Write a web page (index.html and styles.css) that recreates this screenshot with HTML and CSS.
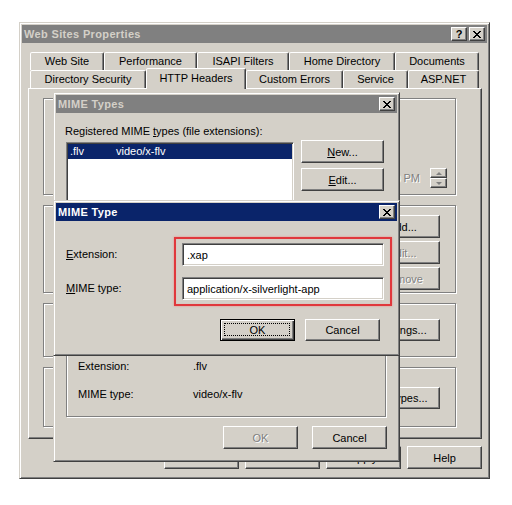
FILE: index.html
```html
<!DOCTYPE html>
<html>
<head>
<meta charset="utf-8">
<title>Web Sites Properties</title>
<link rel="stylesheet" href="styles.css">
</head>
<body>
<div class="desk">

  <div class="win w-props">
    <div class="titlebar inactive">
      <span class="title">Web Sites Properties</span>
      <span class="tbtns">
        <span class="tbtn qm">?</span>
        <span class="tbtn"><svg width="8" height="7" viewBox="0 0 8 7"><path d="M0 0h2v1H0zM6 0h2v1H6zM1 1h2v1H1zM5 1h2v1H5zM2 2h4v1H2zM3 3h2v1H3zM2 4h4v1H2zM1 5h2v1H1zM5 5h2v1H5zM0 6h2v1H0zM6 6h2v1H6z" fill="#000"/></svg></span>
      </span>
    </div>
    <div class="props-body">
      <div class="tabs">
        <div class="tabrow">
          <div class="tab t-web">Web Site</div>
          <div class="tab t-perf">Performance</div>
          <div class="tab t-isapi">ISAPI Filters</div>
          <div class="tab t-home">Home Directory</div>
          <div class="tab t-docs">Documents</div>
        </div>
        <div class="tabrow">
          <div class="tab t-dirsec">Directory Security</div>
          <div class="tab t-http selected">HTTP Headers</div>
          <div class="tab t-errors">Custom Errors</div>
          <div class="tab t-service">Service</div>
          <div class="tab t-asp">ASP.NET</div>
        </div>
      </div>
      <div class="panel">
        <div class="grp g1">
          <div class="timerow">
            <span class="distext">11:00:00 PM</span>
            <span class="spin"><span class="spinbtn"><span class="arr up"></span></span><span class="spinbtn"><span class="arr down"></span></span></span>
          </div>
        </div>
        <div class="grp g2">
          <button class="btn">Add...</button>
          <button class="btn off">Edit...</button>
          <button class="btn off">Remove</button>
        </div>
        <div class="grp g3">
          <button class="btn wide">Edit Ratings...</button>
        </div>
        <div class="grp g4">
          <button class="btn wide">MIME Types...</button>
        </div>
      </div>
      <div class="btnrow">
        <button class="btn">OK</button>
        <button class="btn">Cancel</button>
        <button class="btn">Apply</button>
        <button class="btn">Help</button>
      </div>
    </div>
  </div>

  <div class="win w-types">
    <div class="titlebar inactive">
      <span class="title">MIME Types</span>
      <span class="tbtns">
        <span class="tbtn"><svg width="8" height="7" viewBox="0 0 8 7"><path d="M0 0h2v1H0zM6 0h2v1H6zM1 1h2v1H1zM5 1h2v1H5zM2 2h4v1H2zM3 3h2v1H3zM2 4h4v1H2zM1 5h2v1H1zM5 5h2v1H5zM0 6h2v1H0zM6 6h2v1H6z" fill="#000"/></svg></span>
      </span>
    </div>
    <div class="types-body">
      <div class="lbl">Registered MIME <u>t</u>ypes (file extensions):</div>
      <div class="types-row">
        <div class="listbox">
          <div class="lrow sel"><span class="c1">.flv</span><span>video/x-flv</span></div>
        </div>
        <div class="sidebtns">
          <button class="btn side"><u>N</u>ew...</button>
          <button class="btn side"><u>E</u>dit...</button>
        </div>
      </div>
      <div class="infogrp">
        <div class="inforow"><span class="ik">Extension:</span><span>.flv</span></div>
        <div class="inforow"><span class="ik">MIME type:</span><span>video/x-flv</span></div>
      </div>
      <div class="dlgbtns">
        <button class="btn off">OK</button>
        <button class="btn">Cancel</button>
      </div>
    </div>
  </div>

  <div class="win w-type">
    <div class="titlebar active">
      <span class="title">MIME Type</span>
      <span class="tbtns">
        <span class="tbtn"><svg width="8" height="7" viewBox="0 0 8 7"><path d="M0 0h2v1H0zM6 0h2v1H6zM1 1h2v1H1zM5 1h2v1H5zM2 2h4v1H2zM3 3h2v1H3zM2 4h4v1H2zM1 5h2v1H1zM5 5h2v1H5zM0 6h2v1H0zM6 6h2v1H6z" fill="#000"/></svg></span>
      </span>
    </div>
    <div class="type-body">
      <div class="form">
        <div class="labels">
          <div class="flabel"><u>E</u>xtension:</div>
          <div class="flabel"><u>M</u>IME type:</div>
        </div>
        <div class="redbox">
          <div class="field">.xap</div>
          <div class="field">application/x-silverlight-app</div>
        </div>
      </div>
      <div class="typebtns">
        <button class="btn def"><span class="focus">OK</span></button>
        <button class="btn">Cancel</button>
      </div>
    </div>
  </div>

</div>
</body>
</html>
```

FILE: styles.css
```css
html, body {
  margin: 0;
  padding: 0;
  background: #fff;
}

body {
  font-family: "Liberation Sans", Arial, sans-serif;
  font-size: 11px;
  color: #000;
}

.desk {
  position: relative;
  width: 512px;
  height: 505px;
  overflow: hidden;
  background: #fff;
}

/* ---------- window chrome ---------- */
.win {
  position: absolute;
  box-sizing: border-box;
  background: #d4d0c8;
  border: 1px solid;
  border-color: #d4d0c8 #404040 #404040 #d4d0c8;
  box-shadow: inset 1px 1px 0 #fff, inset -1px -1px 0 #808080;
  padding: 2px;
  display: flex;
  flex-direction: column;
}

.titlebar {
  flex: none;
  height: 18px;
  display: flex;
  align-items: center;
  justify-content: space-between;
  padding: 0 2px 0 2px;
  font-weight: bold;
  letter-spacing: 0.35px;
}

.titlebar.inactive {
  background: #808080;
  color: #d4d0c8;
}

.titlebar.active {
  background: #0a246a;
  color: #fff;
}

.title {
  line-height: 18px;
  white-space: nowrap;
}

.tbtns {
  display: flex;
  gap: 2px;
}

.tbtn {
  box-sizing: border-box;
  width: 16px;
  height: 14px;
  background: #d4d0c8;
  border: 1px solid;
  border-color: #fff #404040 #404040 #fff;
  box-shadow: inset -1px -1px 0 #808080;
  display: flex;
  align-items: center;
  justify-content: center;
  color: #000;
  letter-spacing: 0;
}

.tbtn svg {
  display: block;
  shape-rendering: crispEdges;
}

.tbtn.qm {
  font-size: 11px;
  font-weight: bold;
  line-height: 12px;
}

/* ---------- buttons ---------- */
.btn {
  box-sizing: border-box;
  flex: none;
  width: 75px;
  height: 23px;
  margin: 0;
  padding: 0;
  background: #d4d0c8;
  border: 1px solid;
  border-color: #fff #404040 #404040 #fff;
  box-shadow: inset -1px -1px 0 #808080;
  font-family: "Liberation Sans", Arial, sans-serif;
  font-size: 11px;
  color: #000;
  display: flex;
  align-items: center;
  justify-content: center;
  white-space: nowrap;
}

.btn.off {
  color: #808080;
  text-shadow: 1px 1px 0 #fff;
}

.btn.wide {
  width: 95px;
  height: 22px;
}

.btn.def {
  position: relative;
  border-color: #000;
  box-shadow: inset 1px 1px 0 #fff, inset -1px -1px 0 #404040, inset -2px -2px 0 #808080;
}

.btn.def::after {
  content: "";
  position: absolute;
  left: 3px;
  top: 3px;
  right: 4px;
  bottom: 4px;
  border: 1px dotted #000;
}

/* ---------- properties window ---------- */
.w-props {
  left: 19px;
  top: 22px;
  width: 471px;
  height: 457px;
}

.props-body {
  display: flex;
  flex-direction: column;
}

.tabs {
  margin: 9px 0 0 8px;
}

.tabrow {
  display: flex;
  height: 18px;
}

.tab {
  box-sizing: border-box;
  flex: none;
  height: 18px;
  border: 1px solid;
  border-bottom: none;
  border-color: #fff #404040 transparent #fff;
  border-radius: 2px 2px 0 0;
  box-shadow: inset -1px 0 0 #808080;
  text-align: center;
  line-height: 16px;
  white-space: nowrap;
  background: #d4d0c8;
}

.tab.selected {
  position: relative;
  z-index: 1;
  height: 21px;
  margin-top: -2px;
  line-height: 18px;
}

.t-web { width: 74px; }
.t-perf { width: 93px; }
.t-isapi { width: 92px; }
.t-home { width: 106px; }
.t-docs { width: 84px; }
.t-dirsec { width: 116px; }
.t-http { width: 100px; }
.t-errors { width: 97px; }
.t-service { width: 65px; }
.t-asp { width: 71px; }

.panel {
  box-sizing: border-box;
  height: 351px;
  margin: 0 5px 0 6px;
  border: 1px solid;
  border-color: #fff #404040 #404040 #fff;
  box-shadow: inset -1px -1px 0 #808080;
  padding: 9px 25px 0 14px;
  display: flex;
  flex-direction: column;
  gap: 10px;
}

.grp {
  box-sizing: border-box;
  flex: none;
  border: 1px solid #808080;
  box-shadow: 1px 1px 0 #fff, inset 1px 1px 0 #fff;
  display: flex;
}

.g1 {
  height: 97px;
  justify-content: flex-end;
  align-items: flex-end;
  padding: 0 8px 6px 0;
}

.g2 {
  height: 88px;
  flex-direction: column;
  align-items: flex-end;
  gap: 3px;
  padding: 9px 15px 0 0;
}

.g3 {
  height: 54px;
  justify-content: flex-end;
  align-items: center;
  padding-right: 15px;
}

.g4 {
  height: 60px;
  justify-content: flex-end;
  align-items: center;
  padding: 2px 15px 0 0;
}

.timerow {
  display: flex;
  align-items: center;
  gap: 10px;
}

.distext {
  color: #808080;
  text-shadow: 1px 1px 0 #fff;
  white-space: nowrap;
}

.spin {
  display: flex;
  flex-direction: column;
}

.spinbtn {
  box-sizing: border-box;
  width: 17px;
  height: 10px;
  border: 1px solid;
  border-color: #fff #404040 #404040 #fff;
  box-shadow: inset -1px -1px 0 #808080;
  display: flex;
  align-items: center;
  justify-content: center;
}

.arr {
  width: 0;
  height: 0;
  border-left: 3px solid transparent;
  border-right: 3px solid transparent;
}

.arr.up {
  border-bottom: 3px solid #808080;
}

.arr.down {
  border-top: 3px solid #808080;
}

.btnrow {
  display: flex;
  justify-content: flex-end;
  gap: 6px;
  margin: 7px 5px 0 0;
}

/* ---------- MIME Types window ---------- */
.w-types {
  left: 53px;
  top: 92px;
  width: 347px;
  height: 370px;
}

.types-body {
  flex: 1;
  display: flex;
  flex-direction: column;
  padding: 12px 10px 10px 9px;
}

.lbl {
  line-height: 13px;
  white-space: nowrap;
}

.types-row {
  display: flex;
  gap: 7px;
  margin-top: 2px;
}

.listbox {
  box-sizing: border-box;
  flex: none;
  width: 228px;
  height: 190px;
  margin: 2px 0 0 1px;
  background: #fff;
  border: 1px solid;
  border-color: #808080 #fff #fff #808080;
  box-shadow: inset 1px 1px 0 #404040, inset -1px -1px 0 #d4d0c8;
  padding: 1px;
}

.lrow {
  display: flex;
  height: 15px;
  line-height: 15px;
  padding-left: 2px;
}

.lrow.sel {
  background: #0a246a;
  color: #fff;
}

.lrow .c1 {
  width: 46px;
}

.sidebtns {
  display: flex;
  flex-direction: column;
  gap: 5px;
}

.btn.side {
  width: 83px;
}

.infogrp {
  box-sizing: border-box;
  height: 76px;
  margin: auto 1px 0 1px;
  border: 1px solid #808080;
  box-shadow: 1px 1px 0 #fff, inset 1px 1px 0 #fff;
  padding: 17px 0 0 11px;
  display: flex;
  flex-direction: column;
  gap: 14px;
}

.inforow {
  display: flex;
  line-height: 14px;
}

.ik {
  width: 115px;
}

.dlgbtns {
  display: flex;
  justify-content: flex-end;
  gap: 14px;
  margin-top: 9px;
}

/* ---------- MIME Type window ---------- */
.w-type {
  left: 53px;
  top: 200px;
  width: 347px;
  height: 156px;
}

.type-body {
  display: flex;
  flex-direction: column;
  padding: 16px 17px 0 10px;
}

.form {
  display: flex;
}

.labels {
  flex: none;
  width: 108px;
  display: flex;
  flex-direction: column;
  gap: 11px;
  padding-top: 6px;
}

.flabel {
  height: 23px;
  line-height: 23px;
}

.redbox {
  box-sizing: border-box;
  flex: none;
  width: 218px;
  border: 2px solid #e0383c;
  box-shadow: 0 0 2px rgba(255, 90, 90, 0.6), inset 0 0 1px rgba(255, 120, 120, 0.5);
  padding: 4px 6px 4px 6px;
  display: flex;
  flex-direction: column;
  gap: 11px;
}

.field {
  box-sizing: border-box;
  height: 23px;
  background: #fff;
  border: 1px solid;
  border-color: #808080 #fff #fff #808080;
  box-shadow: inset 1px 1px 0 #404040, inset -1px -1px 0 #d4d0c8;
  padding-left: 4px;
  display: flex;
  align-items: center;
  white-space: nowrap;
}

.typebtns {
  display: flex;
  justify-content: flex-end;
  gap: 10px;
  margin-top: 13px;
}

.typebtns .btn {
  height: 22px;
}
```
